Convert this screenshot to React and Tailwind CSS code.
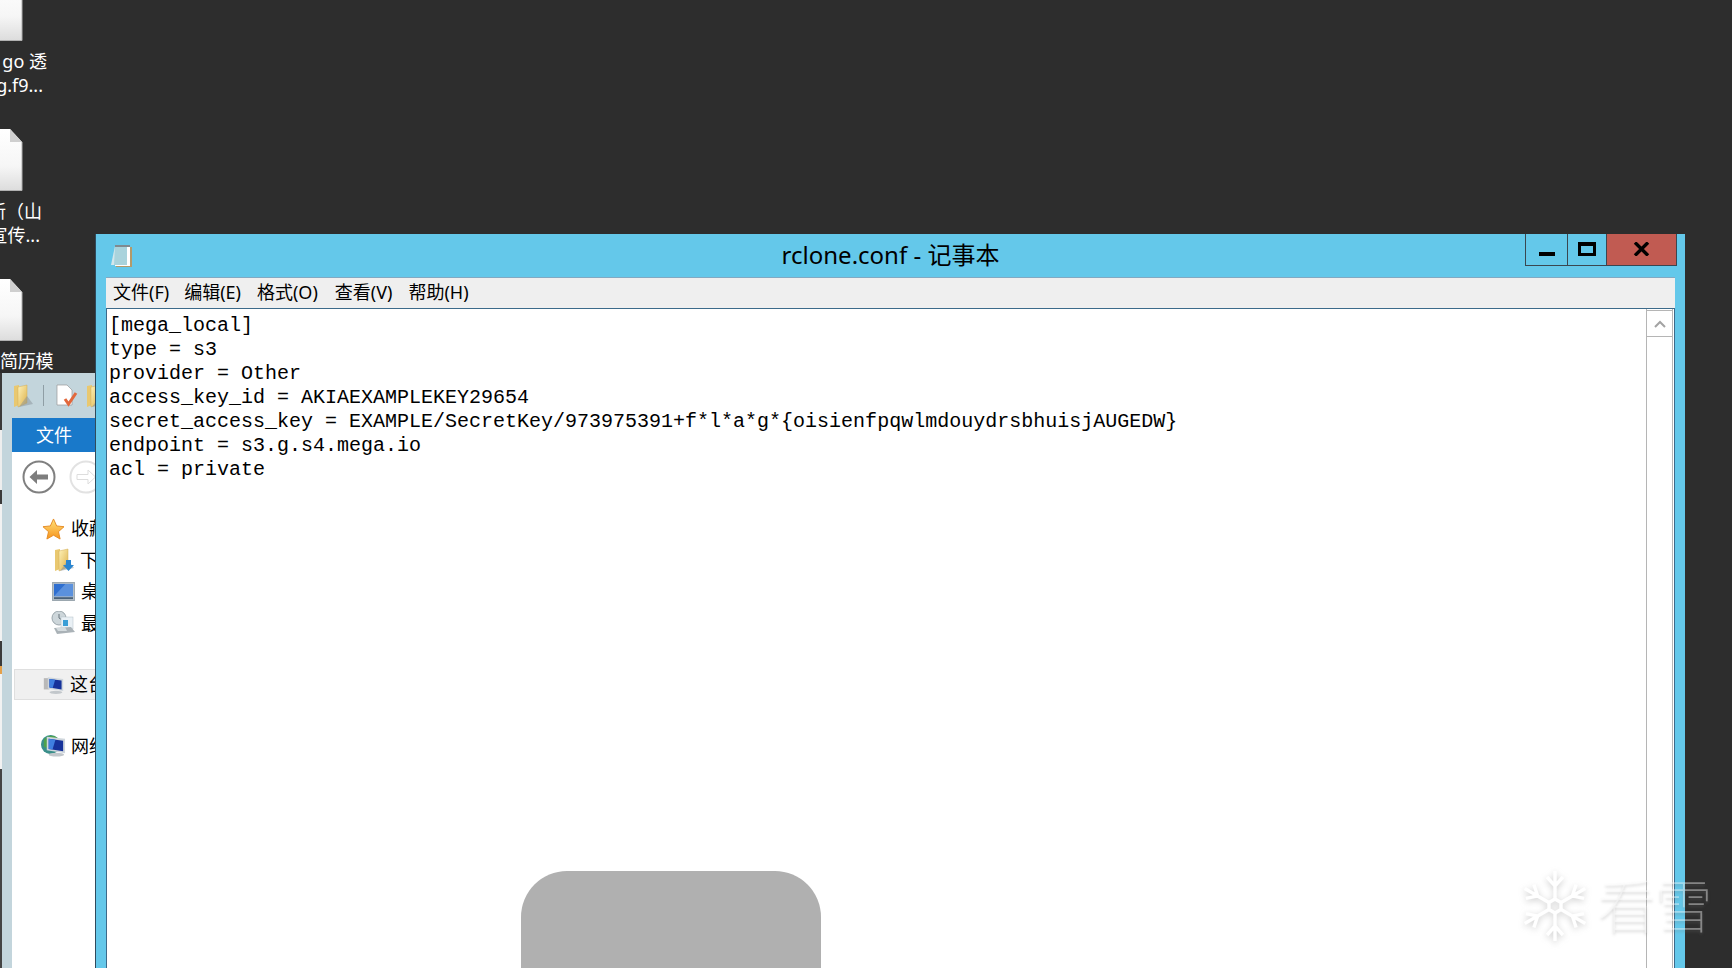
import React from "react";

const cjk = "font-['Noto_Sans','Noto_Sans_CJK_SC',sans-serif]";

const confLines = [
  "[mega_local]",
  "type = s3",
  "provider = Other",
  "access_key_id = AKIAEXAMPLEKEY29654",
  "secret_access_key = EXAMPLE/SecretKey/973975391+f*l*a*g*{oisienfpqwlmdouydrsbhuisjAUGEDW}",
  "endpoint = s3.g.s4.mega.io",
  "acl = private",
];

const menus = [
  ["文件(F)", "ml-[7px]"],
  ["编辑(E)", "ml-[15px]"],
  ["格式(O)", "ml-[16px]"],
  ["查看(V)", "ml-[17px]"],
  ["帮助(H)", "ml-[16px]"],
];

const FileIcon = ({ className }) => (
  <svg className={className} width="23" height="62" viewBox="0 0 23 62">
    <defs>
      <linearGradient id="page" x1="0" y1="0" x2="0" y2="1">
        <stop offset="0" stopColor="#ffffff" />
        <stop offset="0.6" stopColor="#f6f6f6" />
        <stop offset="1" stopColor="#dcdcdc" />
      </linearGradient>
    </defs>
    <path d="M0 0H10L22 13V62H0Z" fill="url(#page)" />
    <path d="M10 0L22 13H10Z" fill="#cfcfcf" />
    <path d="M0 61.5H22V13" fill="none" stroke="#b0b0b0" />
  </svg>
);

const Folder = ({ className, arrow }) => (
  <svg className={className} viewBox="0 0 20 24">
    <defs>
      <linearGradient id="fold" x1="0" y1="0" x2="1" y2="1">
        <stop offset="0" stopColor="#fff2b8" />
        <stop offset="1" stopColor="#dcb04a" />
      </linearGradient>
    </defs>
    <path d="M1 2L6 1V21L1 23Z" fill="#e9c870" />
    <path d="M5 3L14 1V19L5 23Z" fill="url(#fold)" stroke="#d2ac55" strokeWidth="0.5" />
    <path d="M14 12L20 20L6 23Z" fill="#8a949a" opacity="0.5" />
    {arrow && <path d="M12 12H17V17H20L14.5 23L9 17H12Z" fill="#2a86d0" />}
  </svg>
);

const Monitor = ({ className }) => (
  <svg className={className} viewBox="0 0 24 20">
    <rect x="0.5" y="0.5" width="23" height="19" fill="#b7c0c8" stroke="#98a4ad" />
    <rect x="2" y="2" width="20" height="13" fill="#2f6fd0" />
    <path d="M2 15L14 2H22V15Z" fill="#7aa9e6" opacity="0.6" />
    <rect x="2" y="16" width="20" height="2" fill="#49617a" />
  </svg>
);

const Pc = ({ className, globe }) => (
  <svg className={className} viewBox="0 3 26 23">
    {globe && <circle cx="10" cy="13" r="10" fill="#3a8f8a" />}
    {globe && <path d="M3 8C7 3 13 3 17 6L11 11L8 18L3 15Z" fill="#4fa24d" />}
    {!globe && <rect x="1" y="6" width="7" height="14" fill="#b9b9b9" />}
    <path d="M6 5L25 7V22L6 19Z" fill="#cfd6dc" />
    <path d="M8 7L23 9V20L8 17.5Z" fill="#16329a" />
    <path d="M8 7L15 8L12 18.2L8 17.5Z" fill="#3f7fe0" />
    <ellipse cx="16" cy="23.5" rx="8" ry="2" fill="#c2c7cb" />
  </svg>
);

const Recent = ({ className }) => (
  <svg className={className} viewBox="0 0 24 24">
    <circle cx="8" cy="7" r="7" fill="#cdd6da" stroke="#9aa5ab" />
    <path d="M8 3V7L11 9" stroke="#66727a" fill="none" />
    <rect x="10" y="6" width="12" height="12" fill="#e9f0f5" stroke="#b4c0c8" strokeWidth="0.5" />
    <rect x="12" y="9" width="5" height="6" fill="#3a9ed6" />
    <path d="M3 17L20 16L24 21L6 23Z" fill="#aab2b7" />
    <path d="M5 17L14 16L16 20L7 20Z" fill="#d5dcdf" />
  </svg>
);

const Desktop = () => (
  <>
    <FileIcon className="absolute left-0 top-[-21px]" />
    <div className="absolute left-0 top-[49px] w-[60px] overflow-hidden text-[18px] leading-[24px] text-white text-right">
      <div className="whitespace-nowrap flex justify-end pr-[13px]">go 透</div>
      <div className="whitespace-nowrap flex justify-end pr-[17px]">g.f9...</div>
    </div>
    <FileIcon className="absolute left-0 top-[129px]" />
    <div className="absolute left-0 top-[199px] w-[60px] overflow-hidden text-[18px] leading-[24px] text-white">
      <div className="whitespace-nowrap flex justify-end pr-[18px]">
        <span className="ml-[-10px]">新（山</span>
      </div>
      <div className="whitespace-nowrap flex justify-end pr-[20px]">
        <span className="ml-[-10px]">宣传...</span>
      </div>
    </div>
    <FileIcon className="absolute left-0 top-[279px]" />
    <div className="absolute left-0 top-[349px] text-[18px] leading-[24px] text-white whitespace-nowrap tracking-[-0.3px]">简历模</div>
  </>
);

const Row = ({ icon, label, pad }) => (
  <div className={`flex h-[31.5px] items-center ${pad}`}>
    {icon}
    <span className="ml-[6px] whitespace-nowrap text-[18px] text-black">{label}</span>
  </div>
);

const Explorer = () => (
  <div className="absolute left-0 top-[373px] flex h-[595px] w-[96px] overflow-hidden bg-[#c3d5dc]">
    <div className="flex w-[2px] shrink-0 flex-col">
      <div className="h-[57px] bg-[#3a3a3a]" />
      <div className="h-[60px] bg-[#eeeeee]" />
      <div className="h-[14px] bg-[#3a3a3a]" />
      <div className="h-[137px] bg-[#f2f2f2]" />
      <div className="h-[25px] bg-[#3a3a3a]" />
      <div className="h-[8px] bg-[#e5a04a]" />
      <div className="h-[95px] bg-[#f2f2f2]" />
      <div className="flex-1 bg-[#444444]" />
    </div>
    <div className="flex min-w-0 flex-1 flex-col">
      <div className="flex h-[45px] items-center">
        <Folder className="ml-[11px] h-[24px] w-[20px] shrink-0" />
        <div className="ml-[10px] h-[21px] w-px shrink-0 bg-[#8f9ea5]" />
        <svg className="ml-[12px] shrink-0" width="22" height="24" viewBox="0 0 22 24">
          <path d="M1 1H11L16 6V21H1Z" fill="#ffffff" stroke="#9a9a9a" strokeWidth="0.7" />
          <path d="M9 15L12.5 20L20 9" fill="none" stroke="#e2683c" strokeWidth="3" />
        </svg>
        <Folder className="ml-[8px] h-[24px] w-[20px] shrink-0" />
      </div>
      <div className="ml-[10px] flex min-h-0 flex-1 flex-col bg-white">
        <div className={`flex h-[34px] items-center justify-center bg-[#1979ca] text-[18px] text-white ${cjk}`}>文件</div>
        <div className="flex h-[50px] items-center gap-[13px] pl-[10px]">
          <svg className="shrink-0" width="34" height="34" viewBox="0 0 34 34">
            <circle cx="17" cy="17" r="15.5" fill="#fff" stroke="#808080" strokeWidth="2" />
            <path d="M7.5 17L15 10V14.5H26V19.5H15V24Z" fill="#7d7d7d" />
          </svg>
          <svg className="shrink-0" width="34" height="34" viewBox="0 0 34 34">
            <circle cx="17" cy="17" r="15.5" fill="#fff" stroke="#e2e2e2" strokeWidth="2" />
            <path d="M26.5 17L19 10V14.5H8V19.5H19V24Z" fill="#fff" stroke="#dddddd" />
          </svg>
        </div>
        <div className={`mt-[11px] ${cjk}`}>
          <Row
            pad="pl-[30px]"
            label="收藏夹"
            icon={
              <svg className="mt-[1px] shrink-0" width="23" height="22" viewBox="0 0 24 23">
                <defs>
                  <linearGradient id="star" x1="0" y1="0" x2="0" y2="1">
                    <stop offset="0" stopColor="#ffe27a" />
                    <stop offset="1" stopColor="#f7941d" />
                  </linearGradient>
                </defs>
                <path d="M12 1L15.3 8.3L23 9.1L17.2 14.3L18.9 22L12 18L5.1 22L6.8 14.3L1 9.1L8.7 8.3Z" fill="url(#star)" stroke="#e58a24" />
              </svg>
            }
          />
          <Row pad="pl-[42px]" label="下载" icon={<Folder arrow className="h-[24px] w-[20px] shrink-0" />} />
          <Row pad="pl-[40px]" label="桌面" icon={<Monitor className="h-[19px] w-[23px] shrink-0" />} />
          <Row pad="pl-[39px]" label="最近" icon={<Recent className="h-[24px] w-[24px] shrink-0" />} />
        </div>
        <div className={`mt-[30px] ml-[2px] flex h-[31px] items-center border border-r-0 border-[#dfdfdf] bg-[#f0f0f0] pl-[28px] ${cjk}`}>
          <Pc className="h-[20px] w-[21px] shrink-0" />
          <span className="ml-[6px] whitespace-nowrap text-[18px] text-black">这台电脑</span>
        </div>
        <div className={`mt-[30px] flex h-[32px] items-center pl-[29px] ${cjk}`}>
          <Pc globe className="h-[24px] w-[25px] shrink-0" />
          <span className="ml-[5px] whitespace-nowrap text-[18px] text-black">网络</span>
        </div>
      </div>
    </div>
  </div>
);

const NotepadIcon = () => (
  <svg width="22" height="24" viewBox="0 0 22 24">
    <rect x="6" y="3" width="16" height="20" fill="#b39a6a" />
    <path d="M5 2H20V21H1Z" fill="#d3e7ec" />
    <path d="M5 2H18V21H4Z" fill="#a9d3dc" />
    <rect x="5" y="1" width="15" height="2" fill="#808a90" />
    <rect x="17" y="3" width="3" height="18" fill="#ffffff" />
    <rect x="5" y="21" width="15" height="1" fill="#ffffff" />
  </svg>
);

const Notepad = () => (
  <div className="absolute left-[95px] top-[234px] flex h-[734px] w-[1590px] flex-col border-l border-[#2f4a5c] bg-[#64c8ea]">
    <div className="relative flex h-[43px] shrink-0 items-center justify-center pb-[2px]">
      <div className="absolute left-[14px] top-[10px]">
        <NotepadIcon />
      </div>
      <span className={`text-[24px] text-black ${cjk}`}>rclone.conf - 记事本</span>
      <div className="absolute right-[8px] top-0 flex h-[32px] border-x border-b border-[#3a4650]">
        <div className="flex w-[41px] items-end justify-center pb-[9px]">
          <div className="h-[4px] w-[16px] bg-black" />
        </div>
        <div className="flex w-[39px] items-start justify-center border-l border-[#3a4650] pt-[8px]">
          <div className="h-[14px] w-[18px] border-[3px] border-t-[4px] border-black" />
        </div>
        <div className="flex w-[70px] items-start justify-center border-l border-[#3a4650] bg-[#c15b52] pt-[8px]">
          <svg width="17" height="14" viewBox="0 0 17 14">
            <path d="M2 0.5L15 13.5M15 0.5L2 13.5" stroke="#000" strokeWidth="3.4" />
          </svg>
        </div>
      </div>
    </div>
    <div className="ml-[10px] mr-[10px] flex min-h-0 flex-1 flex-col">
      <div className={`flex h-[31px] shrink-0 items-center border-t border-[#82a9c2] bg-[#efefef] pb-[2px] text-[18px] text-black ${cjk}`}>
        {menus.map(([label, gap]) => (
          <span key={label} className={gap}>
            {label}
          </span>
        ))}
      </div>
      <div className="flex min-h-0 flex-1 border border-[#3c6a8a] border-b-0 bg-white">
        <div className="min-w-0 flex-1 pl-[2px] pt-[5px] font-['Liberation_Mono',monospace] text-[20px] leading-[24px] text-black whitespace-pre">
          {confLines.map((line) => (
            <div key={line}>{line}</div>
          ))}
        </div>
        <div className="mr-px w-[27px] shrink-0 border-x border-[#b5b5b5] pt-px">
          <div className="flex h-[27px] items-center justify-center border-y border-[#b5b5b5]">
            <svg width="12" height="8" viewBox="0 0 12 8">
              <path d="M1 7L6 2L11 7" fill="none" stroke="#a3a3a3" strokeWidth="2" />
            </svg>
          </div>
        </div>
      </div>
    </div>
  </div>
);

const Watermark = () => (
  <div className="pointer-events-none absolute left-[1523px] top-[870px] flex items-start">
    <svg width="64" height="72" viewBox="-32 -36 64 72" className="drop-shadow-[0_2px_3px_rgba(120,120,120,0.35)]">
      <g stroke="#ffffff" strokeWidth="3.4" fill="none">
        <polygon points="0,-7 6,-3.5 6,3.5 0,7 -6,3.5 -6,-3.5" />
        {[0, 60, 120, 180, 240, 300].map((a) => (
          <g key={a} transform={`rotate(${a})`}>
            <path d="M0 -7V-35M-8 -29L0 -20L8 -29" />
          </g>
        ))}
      </g>
    </svg>
    <span className={`ml-[11px] text-[58px] leading-[72px] tracking-[-1px] whitespace-nowrap font-thin text-white/40 [text-shadow:0_2px_3px_rgba(120,120,120,0.3)] ${cjk}`}>
      看雪
    </span>
  </div>
);

export default function App() {
  return (
    <div className={`relative h-[968px] w-[1732px] overflow-hidden bg-[#2d2d2d] ${cjk}`}>
      <Desktop />
      <Explorer />
      <Notepad />
      <div className="absolute left-[521px] top-[871px] h-[97px] w-[300px] rounded-t-[46px] bg-[#b0b0b0]" />
      <Watermark />
    </div>
  );
}
